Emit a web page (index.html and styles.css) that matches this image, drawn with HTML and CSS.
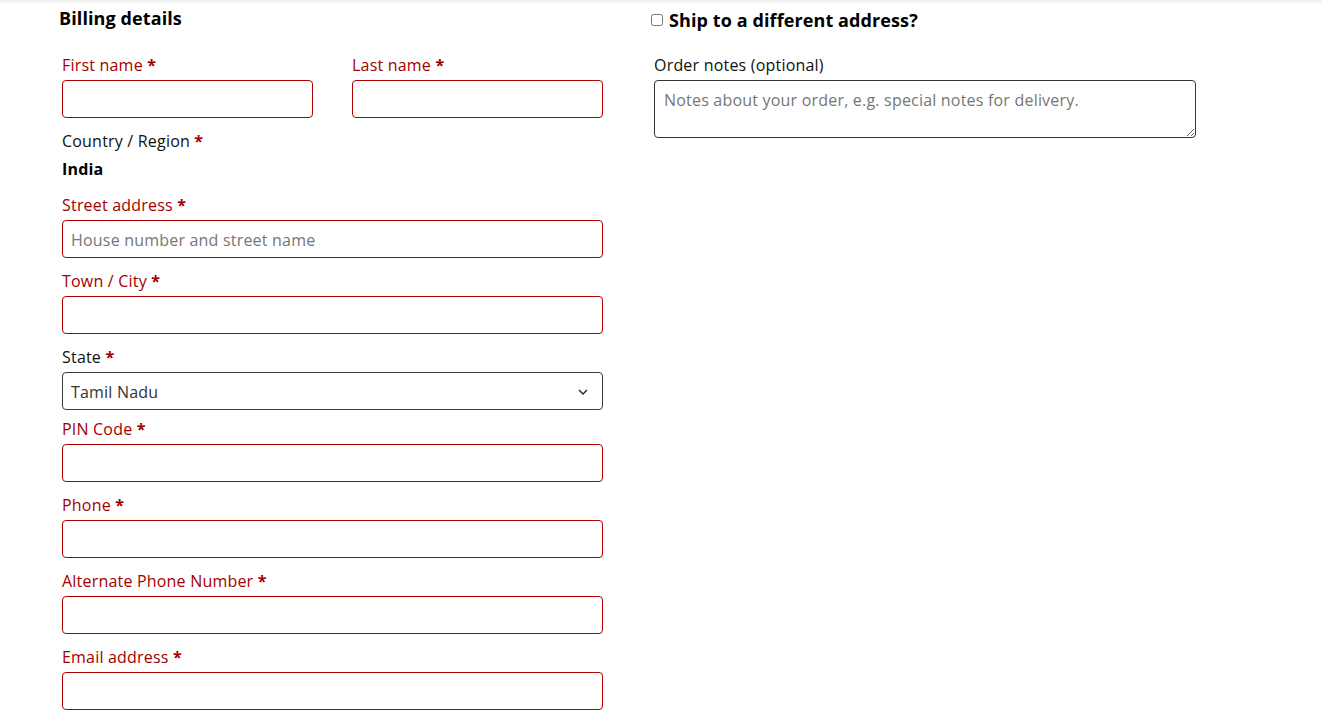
FILE: index.html
```html
<!DOCTYPE html>
<html lang="en">
<head>
<meta charset="utf-8">
<title>Checkout</title>
<link rel="stylesheet" href="styles.css">
</head>
<body>
<div class="topshade"></div>
<form class="checkout">
  <div class="col col-billing">
    <h3 class="heading">Billing details</h3>
    <div class="row-2">
      <div class="field">
        <label class="lbl invalid">First name <abbr class="req">*</abbr></label>
        <input class="inp invalid" type="text">
      </div>
      <div class="field">
        <label class="lbl invalid">Last name <abbr class="req">*</abbr></label>
        <input class="inp invalid" type="text">
      </div>
    </div>
    <div class="field field-country">
      <label class="lbl">Country / Region <abbr class="req">*</abbr></label>
      <strong class="country">India</strong>
    </div>
    <div class="field">
      <label class="lbl invalid">Street address <abbr class="req">*</abbr></label>
      <input class="inp invalid" type="text" placeholder="House number and street name">
    </div>
    <div class="field">
      <label class="lbl invalid">Town / City <abbr class="req">*</abbr></label>
      <input class="inp invalid" type="text">
    </div>
    <div class="field field-select">
      <label class="lbl">State <abbr class="req">*</abbr></label>
      <div class="select">
        <span>Tamil Nadu</span>
        <svg class="chev" width="10" height="6" viewBox="0 0 10 6"><path d="M1 1l4 4 4-4" fill="none" stroke="#222" stroke-width="1.4"/></svg>
      </div>
    </div>
    <div class="field">
      <label class="lbl invalid">PIN Code <abbr class="req">*</abbr></label>
      <input class="inp invalid" type="text">
    </div>
    <div class="field">
      <label class="lbl invalid">Phone <abbr class="req">*</abbr></label>
      <input class="inp invalid" type="text">
    </div>
    <div class="field">
      <label class="lbl invalid">Alternate Phone Number <abbr class="req">*</abbr></label>
      <input class="inp invalid" type="text">
    </div>
    <div class="field">
      <label class="lbl invalid">Email address <abbr class="req">*</abbr></label>
      <input class="inp invalid" type="text">
    </div>
  </div>
  <div class="col col-shipping">
    <h3 class="heading ship"><input type="checkbox" class="cb"><span>Ship to a different address?</span></h3>
    <div class="field">
      <label class="lbl">Order notes (optional)</label>
      <textarea class="notes" placeholder="Notes about your order, e.g. special notes for delivery."></textarea>
    </div>
  </div>
</form>
</body>
</html>
```
FILE: styles.css
```css
html, body {
  margin: 0;
  padding: 0;
  background: #fff;
}
body {
  font-family: "Open Sans", "Noto Sans", sans-serif;
  color: #111;
  font-size: 16px;
  letter-spacing: 0.2px;
}
.topshade {
  height: 4px;
  background: linear-gradient(#ececec, #fff);
}
.checkout {
  display: grid;
  grid-template-columns: 541px 542px;
  column-gap: 51px;
  padding-left: 62px;
}
.heading {
  margin: 0;
  font-size: 18px;
  font-weight: 700;
  line-height: 22px;
  height: 22px;
  margin-top: 3px;
  margin-left: -3px;
  margin-bottom: 25px;
  color: #000;
  letter-spacing: 0.1px;
}
.ship {
  display: flex;
  align-items: center;
  margin-left: -3px;
  margin-top: 5px;
  margin-bottom: 23px;
  font-size: 18px;
}
.cb {
  width: 12px;
  height: 12px;
  margin: 0 6px 0 0;
}
.row-2 {
  display: grid;
  grid-template-columns: 251px 251px;
  column-gap: 39px;
}
.field {
  display: flex;
  flex-direction: column;
  margin-bottom: 12px;
}
.lbl {
  display: block;
  line-height: 22px;
  height: 20px;
  margin-bottom: 6px;
  font-size: 16px;
  color: #111;
}
.lbl.invalid {
  color: #a30000;
}
.req {
  color: #a30000;
  text-decoration: none;
  font-weight: 700;
}
.inp {
  box-sizing: border-box;
  height: 38px;
  width: 100%;
  border: 1px solid #999;
  border-radius: 4px;
  padding: 1px 8px 0;
  font-family: inherit;
  font-size: 16px;
  letter-spacing: 0.2px;
  color: #333;
  background: #fff;
  outline: none;
}
.inp.invalid {
  border-color: #b00000;
}
.inp::placeholder {
  color: #767676;
}
.field-country {
  margin-bottom: 16px;
}
.field-country .lbl {
  margin-bottom: 8px;
}
.country {
  display: block;
  line-height: 22px;
  height: 20px;
  font-weight: 700;
  color: #000;
}
.field-select {
  margin-bottom: 8px;
}
.select {
  box-sizing: border-box;
  height: 38px;
  border: 1px solid #3c3c3c;
  border-radius: 4px;
  display: flex;
  align-items: center;
  justify-content: space-between;
  padding: 1px 14px 0 8px;
  color: #333;
}
.notes {
  box-sizing: border-box;
  width: 542px;
  height: 58px;
  border: 1px solid #3c3434;
  border-radius: 4px;
  padding: 9px 9px 8px;
  font-family: inherit;
  font-size: 16px;
  letter-spacing: 0.2px;
  line-height: 20px;
  resize: vertical;
  outline: none;
}
.notes::placeholder {
  color: #767676;
}
```
